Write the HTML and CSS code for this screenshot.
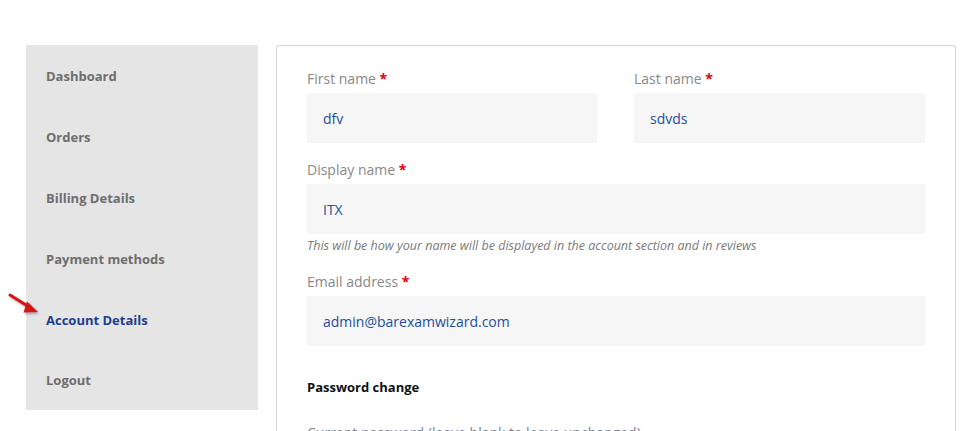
FILE: index.html
```html
<!DOCTYPE html>
<html>
<head>
<meta charset="utf-8">
<link rel="stylesheet" href="styles.css">
</head>
<body>
<div class="page">
  <nav class="sidebar">
    <a class="nav-item">Dashboard</a>
    <a class="nav-item">Orders</a>
    <a class="nav-item">Billing Details</a>
    <a class="nav-item">Payment methods</a>
    <a class="nav-item active">Account Details
      <svg class="arrow" width="34" height="26" viewBox="0 0 34 26">
        <defs>
          <filter id="sh" x="-20%" y="-20%" width="150%" height="150%">
            <feDropShadow dx="1" dy="1.5" stdDeviation="1" flood-color="#000" flood-opacity="0.35"/>
          </filter>
        </defs>
        <g filter="url(#sh)">
          <path d="M2 3 L22 15.5" stroke="#d11414" stroke-width="3" stroke-linecap="round" fill="none"/>
          <path d="M19 9.5 L30 20 L15.5 20.5 Z" fill="#d11414"/>
        </g>
      </svg>
    </a>
    <a class="nav-item">Logout</a>
  </nav>
  <main class="content">
    <div class="row two">
      <div class="field">
        <label class="label">First name <span class="req">*</span></label>
        <div class="input">dfv</div>
      </div>
      <div class="field">
        <label class="label">Last name <span class="req">*</span></label>
        <div class="input">sdvds</div>
      </div>
    </div>
    <div class="field">
      <label class="label">Display name <span class="req">*</span></label>
      <div class="input">ITX</div>
      <em class="help">This will be how your name will be displayed in the account section and in reviews</em>
    </div>
    <div class="field">
      <label class="label">Email address <span class="req">*</span></label>
      <div class="input">admin@barexamwizard.com</div>
    </div>
    <div class="legend">Password change</div>
    <div class="field">
      <label class="label sub">Current password (leave blank to leave unchanged)</label>
    </div>
  </main>
</div>
</body>
</html>
```

FILE: styles.css
```css
* { box-sizing: border-box; }
html, body { margin: 0; padding: 0; background: #ffffff; }
body { font-family: "Open Sans", "DejaVu Sans", sans-serif; height: 431px; overflow: hidden; }

.page {
  display: flex;
  align-items: flex-start;
  gap: 18px;
  padding: 45px 24px 0 26px;
}

.sidebar {
  width: 232px;
  flex: none;
  background: #e5e5e5;
  display: flex;
  flex-direction: column;
}
.nav-item {
  position: relative;
  height: 61px;
  display: flex;
  align-items: center;
  padding-left: 20px;
  font-size: 13px;
  font-weight: 700;
  color: #6e6e6e;
  text-decoration: none;
}
.nav-item:last-child { height: 60px; }
.nav-item.active { color: #1b3f8f; }
.arrow {
  position: absolute;
  left: -18px;
  top: 3px;
}

.content {
  flex: 1;
  border: 1px solid #d4d4d4;
  border-bottom: none;
  border-radius: 3px 3px 0 0;
  padding: 22px 30px 0 30px;
  min-height: 400px;
}

.row.two {
  display: grid;
  grid-template-columns: 290px 291px;
  column-gap: 37px;
}
.field { margin-bottom: 16px; }
.label {
  display: block;
  font-size: 14px;
  line-height: 22px;
  color: #888888;
  margin-bottom: 3px;
}
.req { color: #e0000f; font-weight: 700; }
.input {
  height: 50px;
  background: #f6f6f6;
  display: flex;
  align-items: center;
  padding-left: 16px;
  font-size: 14px;
  color: #1f4ea0;
}
.help {
  display: block;
  font-size: 12.5px;
  line-height: 16px;
  color: #7a7a7a;
  margin-top: 4px;
  margin-bottom: 17px;
}
.field:has(.help) { margin-bottom: 0; }
.legend {
  font-size: 13px;
  font-weight: 700;
  color: #111111;
  margin-top: 31px;
  line-height: 20px;
  margin-bottom: 25px;
}
.label.sub { color: #7a7f9a; }
```
